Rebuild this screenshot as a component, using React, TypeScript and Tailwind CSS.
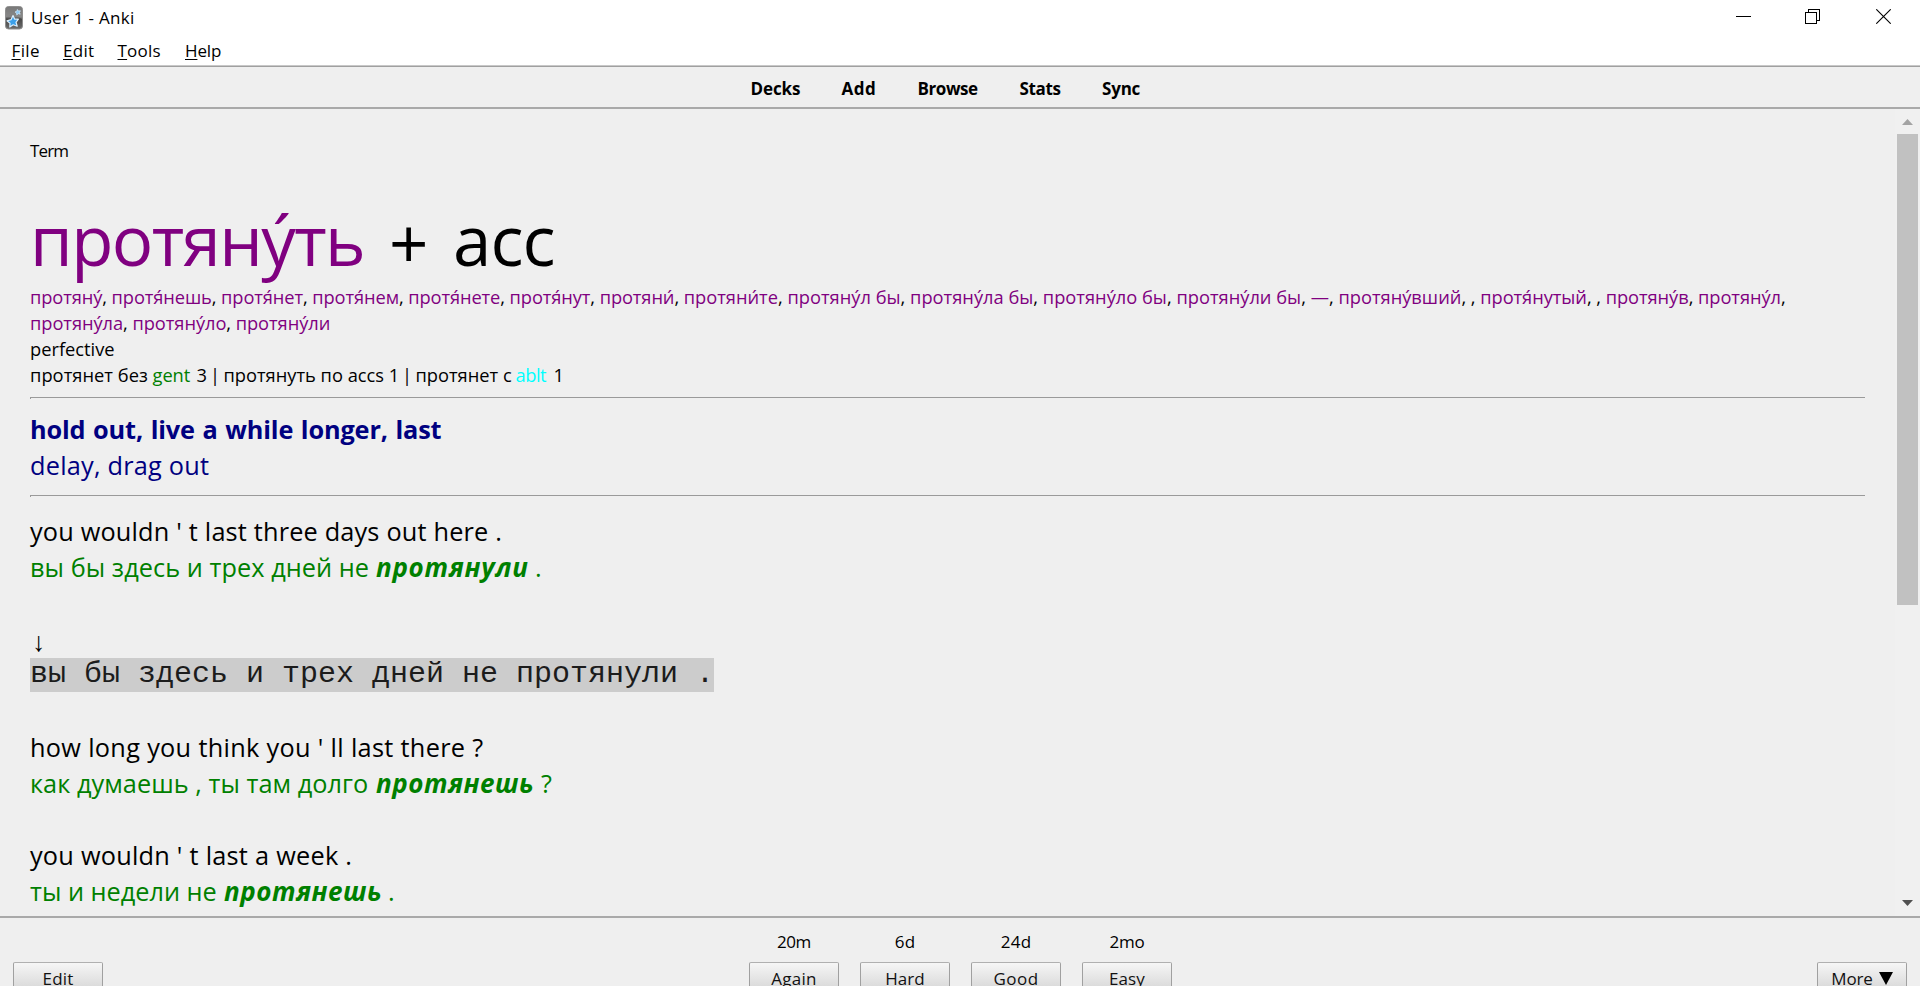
import React from 'react';

const stressed = 'text-[#800080]';

const forms = [
  'протяну́', 'протя́нешь', 'протя́нет', 'протя́нем', 'протя́нете', 'протя́нут', 'протяни́', 'протяни́те',
  'протяну́л бы', 'протяну́ла бы', 'протяну́ло бы', 'протяну́ли бы', '—', 'протяну́вший', '', 'протя́нутый', '',
  'протяну́в', 'протяну́л', 'протяну́ла', 'протяну́ло', 'протяну́ли',
];

function formTracking(i: number) {
  if (i < 7) return 'tracking-[-0.1px]';
  if (i < 14) return 'tracking-[0px]';
  return 'tracking-[-0.06px]';
}

function AnkiIcon() {
  return (
    <svg className="h-6 w-[18px] shrink-0" viewBox="0 0 18 24">
      <defs>
        <linearGradient id="tile" x1="0" y1="0" x2="0" y2="1">
          <stop offset="0" stopColor="#666" />
          <stop offset="0.45" stopColor="#858585" />
          <stop offset="0.55" stopColor="#484848" />
          <stop offset="1" stopColor="#6c6c6c" />
        </linearGradient>
      </defs>
      <rect x="0.5" y="0.5" width="17" height="22.5" rx="3" fill="url(#tile)" stroke="#8f8f8f" />
      <path d="M1 11C6 8 12 9 17 13V4Q17 1 14 1H4Q1 1 1 4Z" fill="#8c8c8c" opacity="0.5" />
      <path d="M8 9.6L9.7 13.2L13.4 13.2L11 16.3L12.2 20.2L8.2 18.8L4.8 21L5 17.2L2 14.8L6 13.7Z" fill="#3ba0ea" stroke="#dceffd" strokeWidth="1.2" strokeLinejoin="round" />
      <path d="M12.4 3.5L13.4 4.9L15.4 4.8L14.5 6.4L15.2 8.2L13.3 7.7L11.7 8.9L11.6 7.1L10 6L11.8 5.3Z" fill="#8cc9f5" stroke="#d0e8fa" strokeWidth="0.7" strokeLinejoin="round" />
    </svg>
  );
}

function TitleBar() {
  return (
    <div className="flex h-[35px] items-center bg-white">
      <div className="flex w-[1736px] items-center gap-[8px] pl-[5px]">
        <AnkiIcon />
        <span className="text-[17px] leading-6 tracking-[0.29px]">User 1 - Anki</span>
      </div>
      <svg className="-mt-[3px] h-[15px] w-[148px]" viewBox="0 0 148 15" fill="none" stroke="#000" shapeRendering="crispEdges">
        <path d="M0 7.5H15" />
        <path d="M69.5 3.5H80.5V14.5H69.5Z M72.5 3V0.5H83.5V11.5H81" />
      </svg>
      <svg className="-mt-[3px] -ml-[8px] h-[15px] w-[15px]" viewBox="0 0 15 15" fill="none" stroke="#000" strokeWidth="1.1">
        <path d="M0.3 0.3L14.7 14.7M14.7 0.3L0.3 14.7" />
      </svg>
    </div>
  );
}

function MenuItem({ text, className }: { text: string; className: string }) {
  return (
    <span className={className}>
      <span className="underline decoration-1 underline-offset-2 [text-decoration-skip-ink:none]">{text[0]}</span>
      {text.slice(1)}
    </span>
  );
}

function MenuBar() {
  return (
    <div className="flex h-[30px] items-center bg-white pl-[11.5px] text-[17px] leading-[19px]">
      <MenuItem text="File" className="w-[51.5px] tracking-[0.38px]" />
      <MenuItem text="Edit" className="w-[54.5px] tracking-[0.29px]" />
      <MenuItem text="Tools" className="w-[67.5px] tracking-[0.22px]" />
      <MenuItem text="Help" className="tracking-[-0.12px]" />
    </div>
  );
}

function Toolbar() {
  return (
    <div className="flex h-[44px] items-center border-t border-t-[#c8c8c8] border-b-2 border-b-[#a9a9a9] text-[17px] font-bold">
      <div className="flex h-[41px] w-full items-center border-t border-t-[#a0a0a0] pt-[3px] pl-[750.5px]">
        <span className="w-[91px] tracking-[-0.1px]">Decks</span>
        <span className="w-[76px] tracking-[0.5px]">Add</span>
        <span className="w-[102px] tracking-[-0.43px]">Browse</span>
        <span className="w-[82.5px] tracking-[-0.35px]">Stats</span>
        <span className="tracking-[-0.2px]">Sync</span>
      </div>
    </div>
  );
}

function Rule() {
  return <div className="h-[2px] w-[1835px] border-t border-l border-[#9a9a9a]" />;
}

function Card() {
  return (
    <div className="w-[1895px] shrink-0 overflow-hidden pl-[30px] text-[18.3px] leading-[26px]">
      <div className="h-[91px] pt-[29px] text-[17px] tracking-[-0.85px]">Term</div>
      <div className="flex h-[84px] text-[69px] leading-[78px]">
        <span className={`w-[359px] tracking-[-1.6px] ${stressed}`}>протяну́ть</span>
        <span className="w-[64px] pt-[3px]">+</span>
        <span className="tracking-[-0.95px]">acc</span>
      </div>
      <div className="w-[1775px] tracking-[-0.05px]">
        {forms.map((form, i) => (
          <span key={i} className={formTracking(i)}>
            <span className={stressed}>{form}</span>
            {i < forms.length - 1 ? ', ' : ''}
          </span>
        ))}
      </div>
      <div>perfective</div>
      <div className="flex whitespace-pre">
        <span className="w-[122.5px] tracking-[0.04px]">протянет без</span>
        <span className="w-[44px] tracking-[-0.05px] text-[#008000]">gent</span>
        <span className="w-[13.5px]">3</span>
        <span className="w-[13.5px]">|</span>
        <span className="w-[178.5px] tracking-[0px]">протянуть по accs 1 </span>
        <span className="w-[13.5px]">|</span>
        <span className="w-[100px]">протянет с</span>
        <span className="w-[38px] tracking-[-0.45px] text-[#00ffff]">ablt</span>
        <span>1</span>
      </div>
      <div className="pt-[9px]"><Rule /></div>
      <div className="py-[12px] text-[25.3px] leading-9 text-[#000080]">
        <div className="font-bold tracking-[-0.14px] [word-spacing:1.2px]">hold out, live a while longer, last</div>
        <div className="tracking-[0.23px]">delay, drag out</div>
      </div>
      <Rule />
      <div className="pt-[16px] text-[25.3px] leading-9">
        <div className="tracking-[0.14px] [word-spacing:0.2px]">you wouldn ' t last three days out here .</div>
        <div className="flex text-[#008000]">
          <span className="w-[346px] tracking-[0.05px]">вы бы здесь и трех дней не</span>
          <span className="w-[159px] text-[26px] font-bold tracking-[0.7px] italic">протянули</span>
          <span>.</span>
        </div>
        <div className="mt-9 flex h-9 items-center pt-[5px] pl-[2px]">
          <span className="origin-center font-['Liberation_Serif'] text-[27px] leading-9">↓</span>
        </div>
        <div className="flex h-9 items-center">
          <span className="h-[34px] w-[684px] bg-[#cccccc] font-['Liberation_Mono'] text-[30px] leading-[33px] whitespace-pre text-[#1c1c1c]">вы бы здесь и трех дней не протянули .</span>
        </div>
        <div className="mt-9 tracking-[0.28px] [word-spacing:0.15px]">how long you think you ' ll last there ?</div>
        <div className="flex text-[#008000]">
          <span className="w-[346px] tracking-[0.04px]">как думаешь , ты там долго</span>
          <span className="w-[165px] text-[26px] font-bold tracking-[0.5px] italic">протянешь</span>
          <span>?</span>
        </div>
        <div className="mt-9 tracking-[0.2px] [word-spacing:0.2px]">you wouldn ' t last a week .</div>
        <div className="flex text-[#008000]">
          <span className="w-[194px] tracking-[-0.01px]">ты и недели не</span>
          <span className="w-[164px] text-[26px] font-bold tracking-[0.5px] italic">протянешь</span>
          <span>.</span>
        </div>
      </div>
    </div>
  );
}

function ScrollBar() {
  return (
    <div className="flex w-[25px] flex-col items-center bg-[#f0f0f0] pt-[10px] pb-[10px]">
      <svg className="h-[6px] w-[11px]" viewBox="0 0 11 6"><path d="M5.5 0L11 6H0Z" fill="#a3a3a3" /></svg>
      <div className="mt-[9px] h-[471px] w-[21px] bg-[#c1c1c1]" />
      <svg className="mt-auto h-[6px] w-[11px]" viewBox="0 0 11 6"><path d="M5.5 6L11 0H0Z" fill="#505050" /></svg>
    </div>
  );
}

function Button({ children }: { children: React.ReactNode }) {
  return (
    <div className="flex h-[32px] w-[90px] shrink-0 justify-center rounded-t-[2px] border border-[#a0a0a0] border-t-[#b0b0b0] bg-linear-to-b from-[#f6f6f6] to-[#d4d4d4] pt-[4px] text-[17px] leading-6 text-[#111]">
      {children}
    </div>
  );
}

function Answer({ time, timeClass, label, labelClass }: { time: string; timeClass: string; label: string; labelClass: string }) {
  return (
    <div className="flex w-[90px] flex-col items-center">
      <div className="h-[32px] text-[17px] leading-6"><span className={timeClass}>{time}</span></div>
      <Button><span className={labelClass}>{label}</span></Button>
    </div>
  );
}

function BottomBar() {
  return (
    <div className="h-[70px] overflow-hidden border-t-2 border-[#a9a9a9]">
      <div className="flex justify-between px-[13px] pt-[12px]">
        <div className="w-[736px] pt-[32px]"><Button><span className="tracking-[0.2px]">Edit</span></Button></div>
        <div className="flex grow gap-[21px]">
          <Answer time="20m" timeClass="tracking-[-0.47px]" label="Again" labelClass="tracking-[0.32px]" />
          <Answer time="6d" timeClass="tracking-[0.1px]" label="Hard" labelClass="tracking-[0.1px]" />
          <Answer time="24d" timeClass="tracking-[0.28px]" label="Good" labelClass="tracking-[0.5px]" />
          <Answer time="2mo" timeClass="tracking-[-0.23px]" label="Easy" labelClass="tracking-[0.1px]" />
        </div>
        <div className="pt-[32px]">
          <Button>
            <span className="flex gap-[6px]">
              <span className="tracking-[-0.15px]">More</span>
              <svg className="mt-[5px] h-[13px] w-[14px]" viewBox="0 0 14 13"><path d="M0 0H14L7 13Z" fill="#000" /></svg>
            </span>
          </Button>
        </div>
      </div>
    </div>
  );
}

export default function App() {
  return (
    <div className="flex h-[986px] w-[1920px] flex-col overflow-hidden bg-[#efefef] font-['Open_Sans','Noto_Sans',sans-serif] text-black">
      <TitleBar />
      <MenuBar />
      <Toolbar />
      <div className="flex h-[807px] shrink-0 overflow-hidden">
        <Card />
        <ScrollBar />
      </div>
      <BottomBar />
    </div>
  );
}
